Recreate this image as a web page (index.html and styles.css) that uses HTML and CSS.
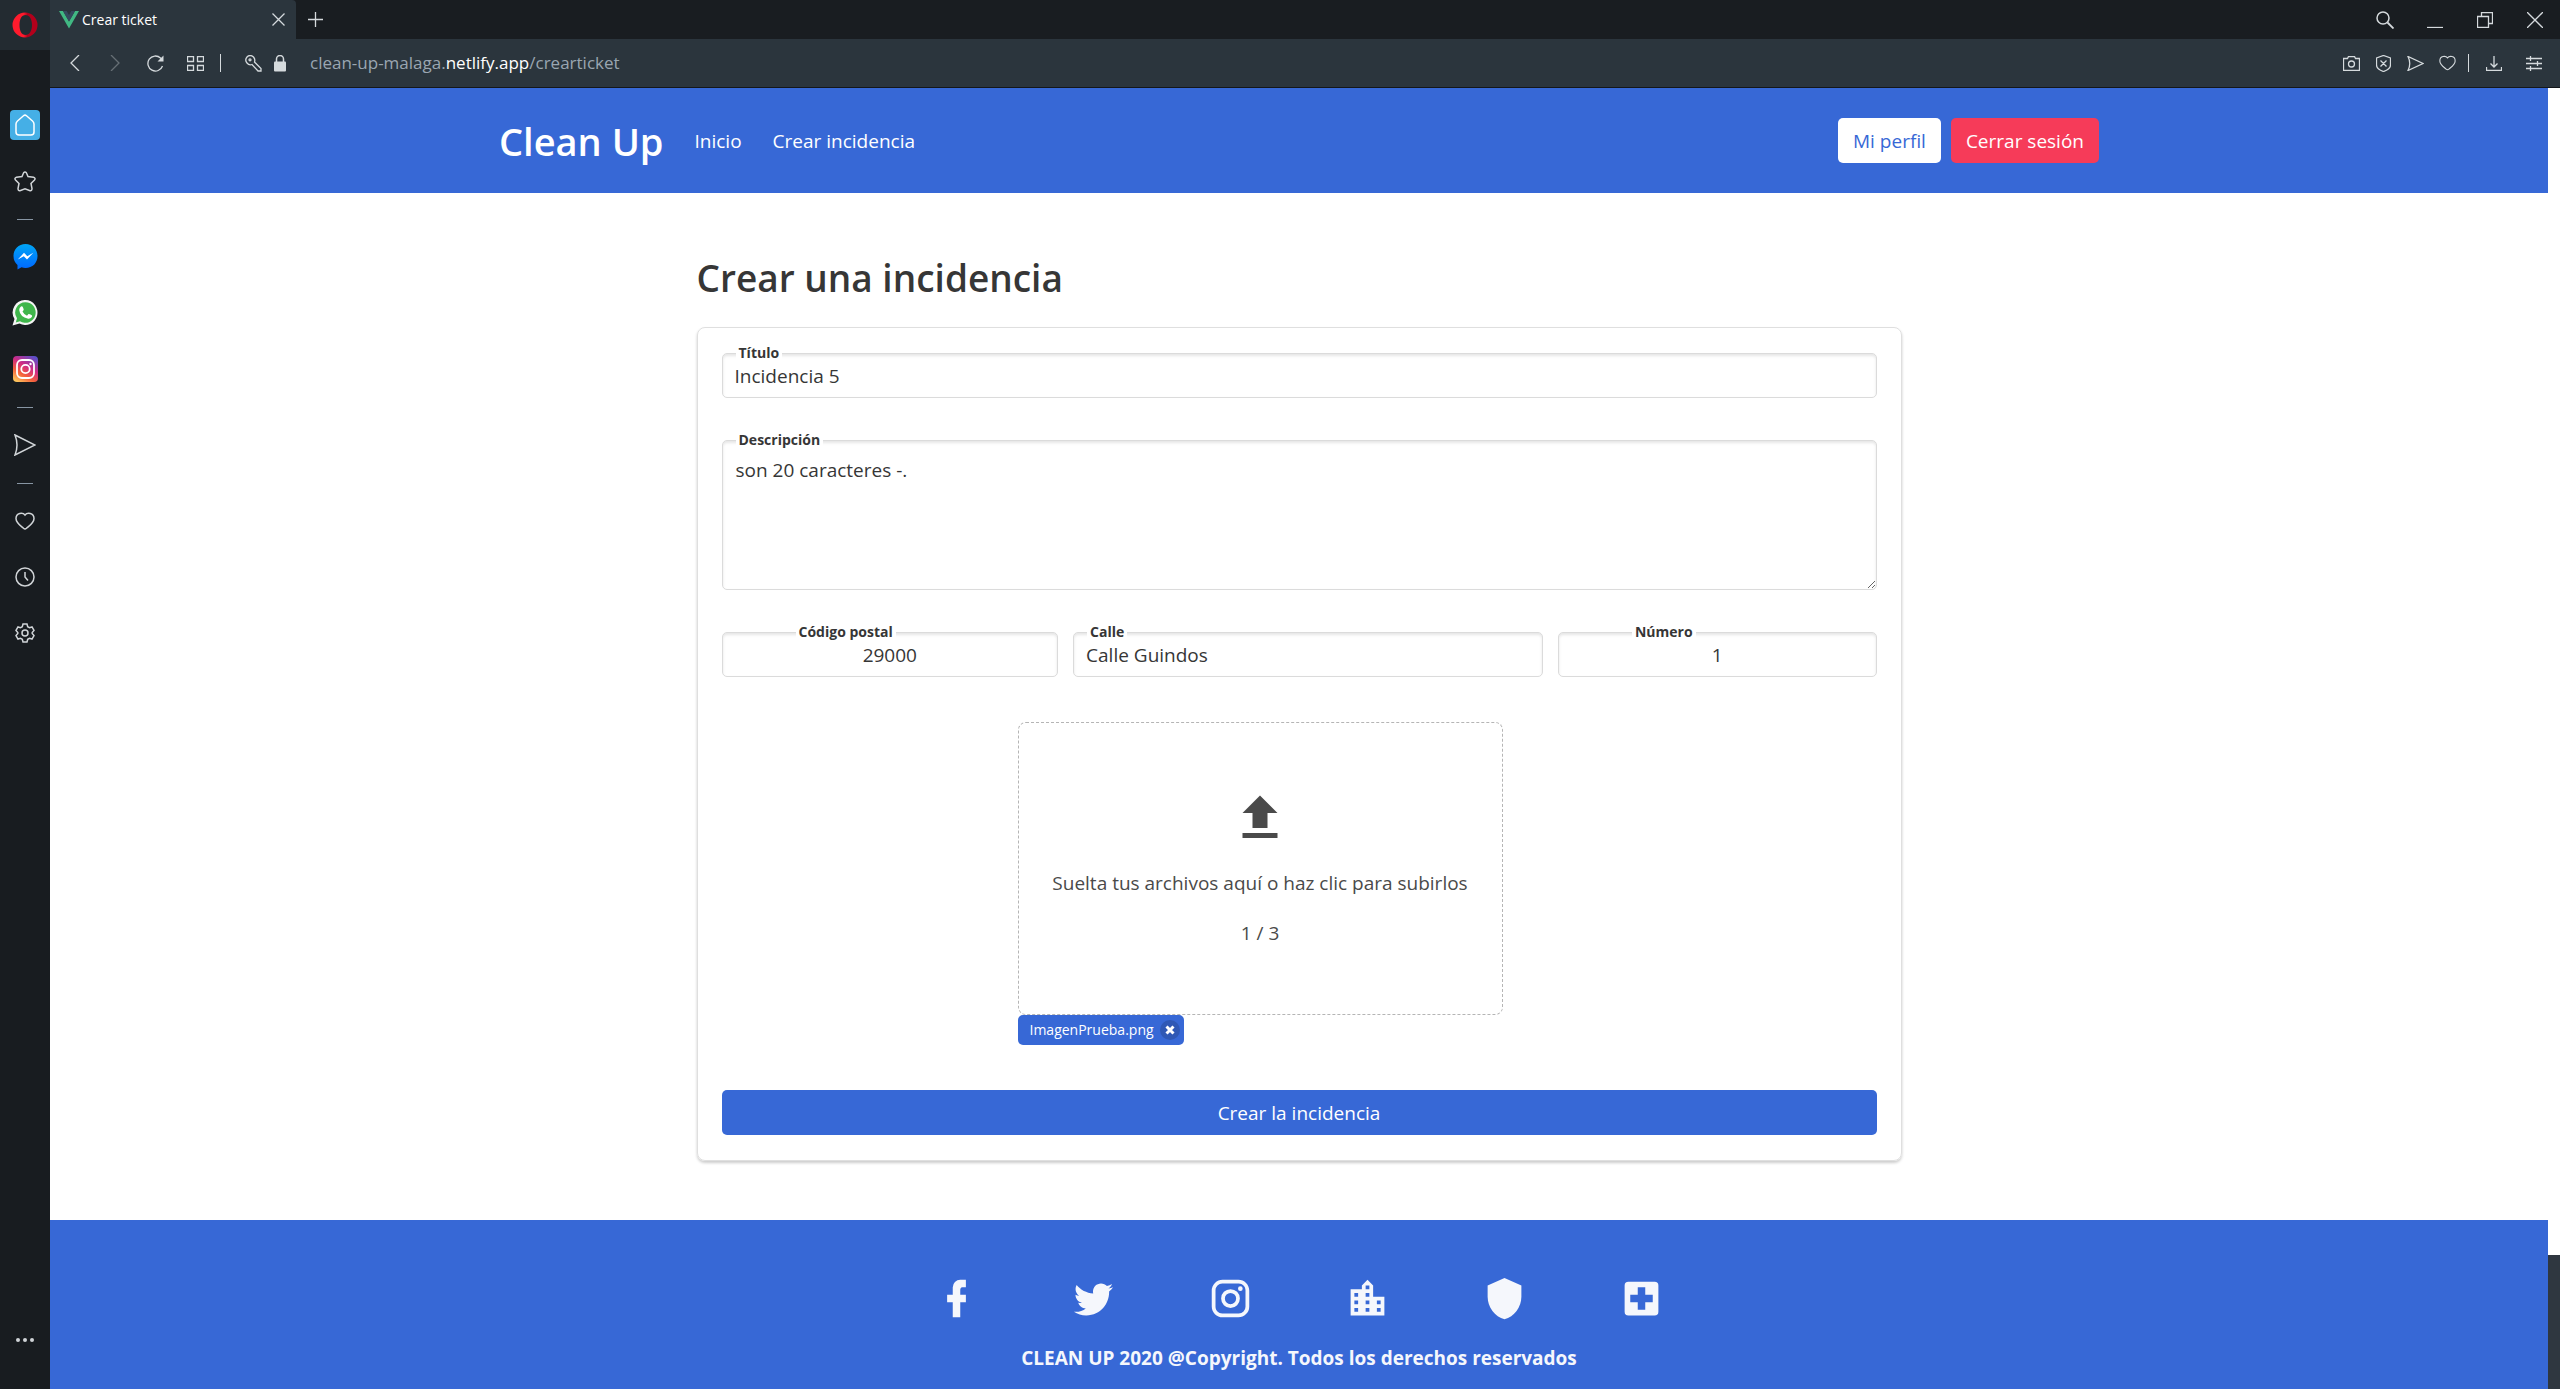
FILE: index.html
```html
<!DOCTYPE html>
<html lang="es">
<head>
<meta charset="utf-8">
<title>Crear ticket</title>
<link rel="stylesheet" href="styles.css">
</head>
<body>
<aside class="rail">
  <div class="rail-logo">
    <svg width="26" height="26" viewBox="0 0 26 26"><defs><linearGradient id="op" x1="0" x2="1" y1="0" y2="0"><stop offset=".45" stop-color="#ff1b2d"/><stop offset=".6" stop-color="#b3001b"/></linearGradient></defs><path fill="url(#op)" fill-rule="evenodd" d="M13 .5a12.5 12.5 0 1 0 0 25a12.5 12.5 0 1 0 0-25M13.500 3C17.500 3 20 7 20 13S17.500 23 13.500 23S7.500 19 7.500 13S9.500 3 13.500 3Z"/></svg>
  </div>
  <nav class="rail-nav">
    <button class="rail-btn home" aria-label="Inicio rápido"><svg width="20" height="22" viewBox="0 0 20 22"><path d="M8.500 1.800Q10 .5 11.500 1.800L17.500 7Q19 8.300 19 10V18Q19 21 16 21H4Q1 21 1 18V10Q1 8.300 2.500 7Z"/></svg></button>
    <button class="rail-btn" aria-label="Marcadores"><svg width="22" height="21" viewBox="0 0 22 21"><path d="M9.600 1.800Q11 .2 12.400 1.800L14 5.500L19.500 6.300Q22 7.200 20.500 9L17 12.500L18 17.500Q18 20.200 15.500 19.500L11 17.800L6.500 19.500Q4 20.200 4 17.500L5 12.500L1.500 9Q0 7.200 2.500 6.300L8 5.500Z"/></svg></button>
    <hr class="rail-sep">
    <button class="rail-btn" aria-label="Messenger"><svg width="25" height="26" viewBox="0 0 25 26"><defs><linearGradient id="ms" x1="0" x2="0" y1="0" y2="1"><stop stop-color="#00a5f5"/><stop offset="1" stop-color="#0067ff"/></linearGradient></defs><path fill="url(#ms)" stroke="none" d="M12.500 0C5.500 0 .5 5 .5 12Q.5 17.500 4.500 21V25.500L8.500 23.200Q10.500 24 12.500 24C19.500 24 24.500 19 24.500 12S19.500 0 12.500 0Z"/><path fill="#fff" stroke="none" d="M4.800 15.500L11 8.800L14.300 12.200L20.300 8.800L14 15.500L10.800 12.200Z"/></svg></button>
    <button class="rail-btn" aria-label="WhatsApp"><svg width="26" height="26" viewBox="0 0 26 26"><path fill="#f4f4f4" stroke="none" d="M13.500 0A12.200 12.500 0 1 1 7.500 23.500L.5 25.500L2.500 19A12.500 12.500 0 0 1 13.500 0"/><path fill="#3fb64b" stroke="none" d="M13.500 2.200A10.200 10.300 0 1 1 8 21.200L3.800 22.400L5 18.300A10.300 10.300 0 0 1 13.500 2.200"/><path fill="#fff" stroke="none" d="M9 6.500Q10.300 6 10.800 7L11.700 9.300Q12 10 10.500 11.500Q12 14.500 15 15.700L16.500 14Q17 13.600 19.800 15.200Q20.500 15.700 19.800 17Q18.500 19 16.200 18.800Q8 17 7.200 10Q7.200 7.500 9 6.500"/></svg></button>
    <button class="rail-btn" aria-label="Instagram"><svg width="25" height="26" viewBox="0 0 25 26"><defs><linearGradient id="ig" x1=".2" x2=".8" y1="1" y2="0"><stop stop-color="#fdc45c"/><stop offset=".3" stop-color="#f4603c"/><stop offset=".6" stop-color="#cf2a84"/><stop offset="1" stop-color="#5b4fc9"/></linearGradient></defs><rect width="25" height="26" rx="4" fill="url(#ig)" stroke="none"/><g fill="none" stroke="#fff" stroke-width="1.800"><rect x="4" y="4" width="17" height="18" rx="5"/><circle cx="12.500" cy="13" r="4.200"/></g><circle cx="17.500" cy="8" r="1.200" fill="#fff" stroke="none"/></svg></button>
    <hr class="rail-sep">
    <button class="rail-btn" aria-label="Mi Flow"><svg width="22" height="22" viewBox="0 0 22 22"><path d="M1 1L21 11L1 21Q5 11 1 1Z"/></svg></button>
    <hr class="rail-sep">
    <button class="rail-btn" aria-label="Favoritos"><svg width="20" height="18" viewBox="0 0 20 18"><path d="M10 3C12 .3 19 .3 19 6.500C19 11 14 14 11.500 16.300Q10 17.600 8.500 16.300C6 14 1 11 1 6.500C1 .3 8 .3 10 3Z"/></svg></button>
    <button class="rail-btn" aria-label="Historial"><svg width="20" height="20" viewBox="0 0 20 20"><circle cx="10" cy="10" r="9"/><path d="M10 5V10L13 13.500"/></svg></button>
    <button class="rail-btn" aria-label="Ajustes"><svg width="20" height="20" viewBox="0 0 20 20"><path d="M8 1H12L12.700 3.700L14.500 4.700L17 4L19 7.500L17.200 9.500V10.500L19 12.500L17 16L14.500 15.300L12.700 16.300L12 19H8L7.300 16.300L5.500 15.300L3 16L1 12.500L2.800 10.500V9.500L1 7.500L3 4L5.500 4.700L7.300 3.700Z"/><circle cx="10" cy="10" r="3"/></svg></button>
  </nav>
  <button class="rail-more" aria-label="Más"><svg width="18" height="4" viewBox="0 0 18 4"><circle cx="2" cy="2" r="2"/><circle cx="9" cy="2" r="2"/><circle cx="16" cy="2" r="2"/></svg></button>
</aside>
<div class="window">
  <div class="tabbar">
    <div class="tab">
      <svg width="20" height="18" viewBox="0 0 20 18"><path fill="#41b883" d="M0 0H4L10 10.500L16 0H20L10 17.500Z"/><path fill="#35495e" d="M4 0H7.700L10 4L12.300 0H16L10 10.500Z"/></svg>
      <span class="tab-title">Crear ticket</span>
      <button class="ico" aria-label="Cerrar pestaña"><svg width="13" height="13" viewBox="0 0 13 13"><path d="M.5 .5L12.500 12.500M12.500 .5L.5 12.500"/></svg></button>
    </div>
    <button class="ico new-tab" aria-label="Nueva pestaña"><svg width="15" height="15" viewBox="0 0 15 15"><path d="M7.500 0V15M0 7.500H15"/></svg></button>
    <div class="win-controls">
      <button class="ico" aria-label="Buscar"><svg width="18" height="18" viewBox="0 0 18 18"><circle cx="7" cy="7" r="6" stroke-width="1.500"/><path stroke-width="1.800" d="M11.500 11.500L17.500 17.500"/></svg></button>
      <button class="ico" aria-label="Minimizar"><svg width="16" height="16" viewBox="0 0 16 16"><path d="M0 15.500H16"/></svg></button>
      <button class="ico" aria-label="Restaurar"><svg width="16" height="16" viewBox="0 0 16 16"><path d="M.5 4.500H11.500V15.500H.5ZM4.500 4.500V.5H15.500V11.500H11.500"/></svg></button>
      <button class="ico" aria-label="Cerrar"><svg width="16" height="16" viewBox="0 0 16 16"><path d="M0 0L16 16M16 0L0 16"/></svg></button>
    </div>
  </div>
  <div class="toolbar">
    <div class="tools-left">
      <button class="ico" aria-label="Atrás"><svg width="10" height="16" viewBox="0 0 10 16"><path d="M9 0L1 8L9 16"/></svg></button>
      <button class="ico dim" aria-label="Adelante"><svg width="10" height="16" viewBox="0 0 10 16"><path d="M1 0L9 8L1 16"/></svg></button>
      <button class="ico" aria-label="Recargar"><svg width="17" height="17" viewBox="0 0 17 17"><path d="M15.500 11A7.500 7.500 0 1 1 13.500 3L15.500 5"/><path class="solid" d="M16.500 .5V6.500H10.500Z"/></svg></button>
      <button class="ico" aria-label="Pestañas"><svg width="17" height="15" viewBox="0 0 17 15"><path d="M.5 .5H6.500V5.500H.5ZM10.500 .5H16.500V5.500H10.500ZM.5 9.500H6.500V14.500H.5ZM10.500 9.500H16.500V14.500H10.500Z"/></svg></button>
    </div>
    <span class="bar-sep"></span>
    <div class="address">
      <svg class="line" width="17" height="17" viewBox="0 0 17 17"><path d="M2 2Q5-1 8.500 2Q10.500 4.500 9.500 7L16 13.500V16H13L7 9.500Q4 10.500 2 8Q-.5 5 2 2Z"/><circle cx="5" cy="4.800" r="1"/></svg>
      <svg width="12" height="17" viewBox="0 0 12 17"><path fill="none" stroke="#d5dadd" stroke-width="1.500" d="M2.500 8V4A3.500 3.500 0 0 1 9.500 4V8"/><rect y="6.500" width="12" height="10" rx="1" fill="#d5dadd"/></svg>
      <span class="url">clean-up-malaga.<b>netlify.app</b>/crearticket</span>
    </div>
    <div class="tools-right">
      <button class="ico" aria-label="Captura"><svg width="17" height="15" viewBox="0 0 17 15"><path d="M.5 2.500H4.500L5.500 .5H11.500L12.500 2.500H16.500V14.500H.5Z"/><circle cx="8.500" cy="8" r="3"/></svg></button>
      <button class="ico" aria-label="Bloqueador"><svg width="15" height="17" viewBox="0 0 15 17"><path d="M7.500 .5L14.500 3V10Q14.500 14 7.500 16.500Q.5 14 .5 10V3ZM4.500 5.500L10.500 11.500M10.500 5.500L4.500 11.500"/></svg></button>
      <button class="ico" aria-label="Enviar"><svg width="17" height="15" viewBox="0 0 17 15"><path d="M1 .5L16 7.500L1 14.500Q4.500 7.500 1 .5Z"/></svg></button>
      <button class="ico" aria-label="Guardar"><svg width="17" height="16" viewBox="0 0 20 18"><path d="M10 3C12 .3 19 .3 19 6.500C19 11 14 14 11.500 16.300Q10 17.600 8.500 16.300C6 14 1 11 1 6.500C1 .3 8 .3 10 3Z"/></svg></button>
      <span class="bar-sep"></span>
      <button class="ico wide" aria-label="Descargas"><svg width="16" height="15" viewBox="0 0 16 15"><path d="M8 0V11M4.500 7.500L8 11L11.500 7.500M.5 11V14.500H15.500V11"/></svg></button>
      <button class="ico wide" aria-label="Configuración rápida"><svg width="16" height="15" viewBox="0 0 16 15"><path d="M0 2.500H16M0 7.500H16M0 12.500H16M4.500 0V5M11.500 5V10M4.500 10V15"/></svg></button>
    </div>
  </div>
  <div class="viewport">
    <div class="page">
      <header class="navbar">
        <div class="navbar-inner">
          <a class="brand" href="#">Clean Up</a>
          <a class="nav-link" href="#">Inicio</a>
          <a class="nav-link" href="#">Crear incidencia</a>
          <div class="nav-actions">
            <button class="btn white">Mi perfil</button>
            <button class="btn danger">Cerrar sesión</button>
          </div>
        </div>
      </header>
      <main class="content">
        <h1>Crear una incidencia</h1>
        <form class="card">
          <div class="field">
            <label for="titulo">Título</label>
            <input id="titulo" type="text" value="Incidencia 5">
          </div>
          <div class="field">
            <label for="desc">Descripción</label>
            <textarea id="desc">son 20 caracteres -.</textarea>
          </div>
          <div class="address-row">
            <div class="field numeric">
              <label for="cp">Código postal</label>
              <input id="cp" type="text" inputmode="numeric" value="29000">
            </div>
            <div class="field">
              <label for="calle">Calle</label>
              <input id="calle" type="text" value="Calle Guindos">
            </div>
            <div class="field numeric">
              <label for="num">Número</label>
              <input id="num" type="text" inputmode="numeric" value="1">
            </div>
          </div>
          <div class="upload">
            <button type="button" class="dropzone">
              <svg width="60" height="60" viewBox="0 0 24 24"><path d="M9,16V10H5L12,3L19,10H15V16H9M5,20V18H19V20H5Z"/></svg>
              <span>Suelta tus archivos aquí o haz clic para subirlos</span>
              <span>1 / 3</span>
            </button>
            <span class="tag">ImagenPrueba.png
              <button type="button" class="tag-x" aria-label="Quitar"><svg width="10" height="10" viewBox="0 0 10 10"><path d="M1.500 1.500L8.500 8.500M8.500 1.500L1.500 8.500"/></svg></button>
            </span>
          </div>
          <button type="submit" class="btn primary">Crear la incidencia</button>
        </form>
      </main>
      <footer class="footer">
        <div class="social">
          <a href="#" aria-label="Facebook"><svg viewBox="0 0 24 24"><path d="M17,2V6H15C14.310,6 14,6.810 14,7.500V10H17V14H14V22H10V14H7V10H10V6A4,4 0 0,1 14,2H17Z"/></svg></a>
          <a href="#" aria-label="Twitter"><svg viewBox="0 0 24 24"><path d="M22.460,6C21.690,6.350 20.860,6.580 20,6.690C20.880,6.160 21.560,5.320 21.880,4.310C21.050,4.810 20.130,5.160 19.160,5.360C18.370,4.500 17.260,4 16,4C13.650,4 11.730,5.920 11.730,8.290C11.730,8.630 11.770,8.960 11.840,9.270C8.280,9.090 5.110,7.380 3,4.790C2.630,5.420 2.420,6.160 2.420,6.940C2.420,8.430 3.170,9.750 4.330,10.500C3.620,10.500 2.960,10.300 2.380,10C2.380,12.110 3.860,13.850 5.820,14.240C5.460,14.340 5.080,14.390 4.690,14.390C4.420,14.390 4.150,14.360 3.890,14.310C4.430,16 6,17.260 7.890,17.290C6.430,18.450 4.580,19.130 2.560,19.130C2.220,19.130 1.880,19.110 1.540,19.070C3.440,20.290 5.700,21 8.120,21C16,21 20.330,14.460 20.330,8.790C20.330,8.600 20.330,8.420 20.320,8.230C21.160,7.630 21.880,6.870 22.460,6Z"/></svg></a>
          <a href="#" aria-label="Instagram"><svg viewBox="0 0 24 24"><path d="M7.800,2H16.200C19.400,2 22,4.600 22,7.800V16.200A5.800,5.800 0 0,1 16.200,22H7.800C4.600,22 2,19.400 2,16.200V7.800A5.800,5.800 0 0,1 7.800,2M7.600,4A3.600,3.600 0 0,0 4,7.600V16.400C4,18.390 5.610,20 7.600,20H16.400A3.600,3.600 0 0,0 20,16.400V7.600C20,5.610 18.390,4 16.400,4H7.600M17.250,5.500A1.250,1.250 0 0,1 18.500,6.750A1.250,1.250 0 0,1 17.250,8A1.250,1.250 0 0,1 16,6.750A1.250,1.250 0 0,1 17.250,5.500M12,7A5,5 0 0,1 17,12A5,5 0 0,1 12,17A5,5 0 0,1 7,12A5,5 0 0,1 12,7M12,9A3,3 0 0,0 9,12A3,3 0 0,0 12,15A3,3 0 0,0 15,12A3,3 0 0,0 12,9Z"/></svg></a>
          <a href="#" aria-label="Ayuntamiento"><svg viewBox="0 0 24 24"><path d="M19,15H17V13H19M19,19H17V17H19M13,7H11V5H13M13,11H11V9H13M13,15H11V13H13M13,19H11V17H13M7,11H5V9H7M7,15H5V13H7M7,19H5V17H7M15,11V5L12,2L9,5V7H3V21H21V11H15Z"/></svg></a>
          <a href="#" aria-label="Policía"><svg viewBox="0 0 24 24"><path d="M12,1L3,5V11C3,16.550 6.840,21.740 12,23C17.160,21.740 21,16.550 21,11V5L12,1Z"/></svg></a>
          <a href="#" aria-label="Hospital"><svg viewBox="0 0 24 24"><path d="M18,14H14V18H10V14H6V10H10V6H14V10H18M19,3H5A2,2 0 0,0 3,5V19A2,2 0 0,0 5,21H19A2,2 0 0,0 21,19V5A2,2 0 0,0 19,3Z"/></svg></a>
        </div>
        <p class="copyright">CLEAN UP 2020 @Copyright. Todos los derechos reservados</p>
      </footer>
    </div>
    <div class="scroll"><div class="thumb"></div></div>
  </div>
</div>
</body>
</html>
```
FILE: styles.css
```css
* { box-sizing: border-box; }

body {
  margin: 0;
  display: flex;
  height: 100vh;
  overflow: hidden;
  background: #fff;
  color: #363636;
  font-family: "Open Sans", "Noto Sans", sans-serif;
  font-size: 19px;
  line-height: 30px;
}

button, input, textarea { font: inherit; color: inherit; }
button { border: 0; padding: 0; background: none; cursor: pointer; }
a { color: inherit; text-decoration: none; }
svg { display: block; flex: none; }

/* Side rail */
.rail {
  flex: 0 0 50px;
  display: flex;
  flex-direction: column;
  background: #181c20;
}
.rail-logo {
  height: 50px;
  display: grid;
  place-items: center;
  background: #232b31;
}
.rail-nav { display: flex; flex-direction: column; padding-top: 47px; }
.rail-btn {
  height: 56px;
  display: grid;
  place-items: center;
}
.rail-btn svg { fill: none; stroke: #d0d4d7; stroke-width: 1.5; }
.home svg {
  box-sizing: content-box;
  padding: 4px 5px;
  border-radius: 4px;
  background: #45afe6;
  stroke: #fff;
}
.rail-sep { width: 16px; height: 1px; margin: 10px auto 9px; border: 0; background: #8795a3; }
.rail-more { margin: auto auto 47px; }
.rail-more svg { fill: #d0d4d7; }

/* Browser frame */
.window { flex: 1; min-width: 0; display: flex; flex-direction: column; }
.ico { display: grid; place-items: center; width: 32px; height: 32px; }
.ico svg, .line { fill: none; stroke: #d5dadd; stroke-width: 1.3; }
.ico .solid { fill: #d5dadd; stroke: none; }
.ico.dim { opacity: .35; }
.ico.wide { width: 40px; }

.tabbar {
  flex: 0 0 39px;
  display: flex;
  align-items: center;
  background: #191d21;
}
.tab {
  width: 246px;
  height: 39px;
  padding: 0 2px 0 9px;
  display: flex;
  align-items: center;
  gap: 3px;
  border-radius: 0 4px 0 0;
  background: #2b353d;
  color: #fff;
}
.tab-title { flex: 1; font-size: 14px; }
.new-tab { margin-left: 3px; }
.win-controls { margin-left: auto; display: flex; }
.win-controls .ico { width: 50px; }

.toolbar {
  flex: 0 0 49px;
  display: flex;
  align-items: center;
  padding: 0 6px 0 5px;
  background: #2b353d;
  border-bottom: 1px solid #14171a;
}
.tools-left { display: flex; }
.tools-left .ico { width: 40px; }
.bar-sep { width: 1px; height: 18px; margin: 0 5px; background: #d5dadd; }
.address { flex: 1; display: flex; align-items: center; gap: 12px; padding-left: 19px; }
.url { margin-left: 12px; font-size: 17px; color: #9aa6b1; }
.url b { font-weight: 400; color: #fff; }
.tools-right { display: flex; align-items: center; }

.viewport { flex: 1; min-height: 0; display: flex; }
.page { flex: 1; min-width: 0; overflow: hidden; }
.scroll { flex: 0 0 12px; display: flex; align-items: flex-end; }
.thumb { width: 100%; height: 134px; background: #2f3740; }

/* Page header */
.navbar { background: #3768d6; color: #fff; }
.navbar-inner {
  max-width: 1600px;
  min-height: 105px;
  margin: 0 auto;
  display: flex;
  align-items: center;
  gap: 31px;
}
.brand { font-size: 38px; font-weight: 600; line-height: 48px; }
.nav-actions { margin-left: auto; display: flex; gap: 10px; }
.btn { height: 45px; padding: 0 15px; border-radius: 5px; }
.white { background: #fff; color: #3768d6; }
.danger { background: #f63b59; color: #fff; }
.primary { width: 100%; background: #3768d6; color: #fff; }

/* Form */
.content { width: 1205px; max-width: 100%; margin: 0 auto; padding: 60px 0 59px; }
h1 { margin: 0 0 24px; font-size: 37px; font-weight: 600; line-height: 50px; }
.card {
  display: flex;
  flex-direction: column;
  padding: 25px 24px;
  border: 1px solid #dfdfdf;
  border-radius: 8px;
  box-shadow: 0 2px 3px rgba(0, 0, 0, .2);
}
.field { position: relative; margin-bottom: 42px; }
.field label {
  position: absolute;
  top: -9px;
  left: 14px;
  padding: 0 3px;
  background: #fff;
  font-size: 14px;
  font-weight: 700;
  line-height: 18px;
}
.field input, .field textarea {
  display: block;
  width: 100%;
  border: 1px solid #dbdbdb;
  border-radius: 5px;
  background: #fff;
  box-shadow: inset 0 2px 3px rgba(10, 10, 10, .1);
}
.field input { height: 45px; padding: 0 12px; }
.field textarea { height: 150px; padding: 14px 13px; resize: vertical; }
.field.numeric label { left: 74px; }
.field.numeric input { text-align: center; }
.address-row { display: grid; grid-template-columns: 336fr 469fr 318fr; gap: 15px; }

.upload {
  align-self: center;
  margin: 3px 78px 45px 0;
  display: flex;
  flex-direction: column;
  align-items: flex-start;
}
.dropzone {
  width: 485px;
  padding: 65px 30px 66px;
  display: flex;
  flex-direction: column;
  align-items: center;
  gap: 20px;
  border: 1px dashed #b5b5b5;
  border-radius: 8px;
  color: #4a4a4a;
}
.dropzone svg { fill: #4a4a4a; }
.tag {
  display: flex;
  align-items: center;
  gap: 6px;
  height: 30px;
  padding: 0 4px 0 12px;
  border-radius: 5px;
  background: #3768d6;
  color: #fff;
  font-size: 14px;
}
.tag-x {
  display: grid;
  place-items: center;
  width: 20px;
  height: 20px;
  border-radius: 50%;
  background: #2f58b5;
}
.tag-x svg { stroke: #fff; stroke-width: 3; }

/* Footer */
.footer { padding: 56px 0; background: #3768d6; color: #f5f7fc; }
.social { display: flex; justify-content: center; gap: 92px; }
.social svg { width: 45px; height: 45px; fill: #f5f7fc; }
.copyright { margin: 22px 0 0; text-align: center; font-weight: 700; }
```
